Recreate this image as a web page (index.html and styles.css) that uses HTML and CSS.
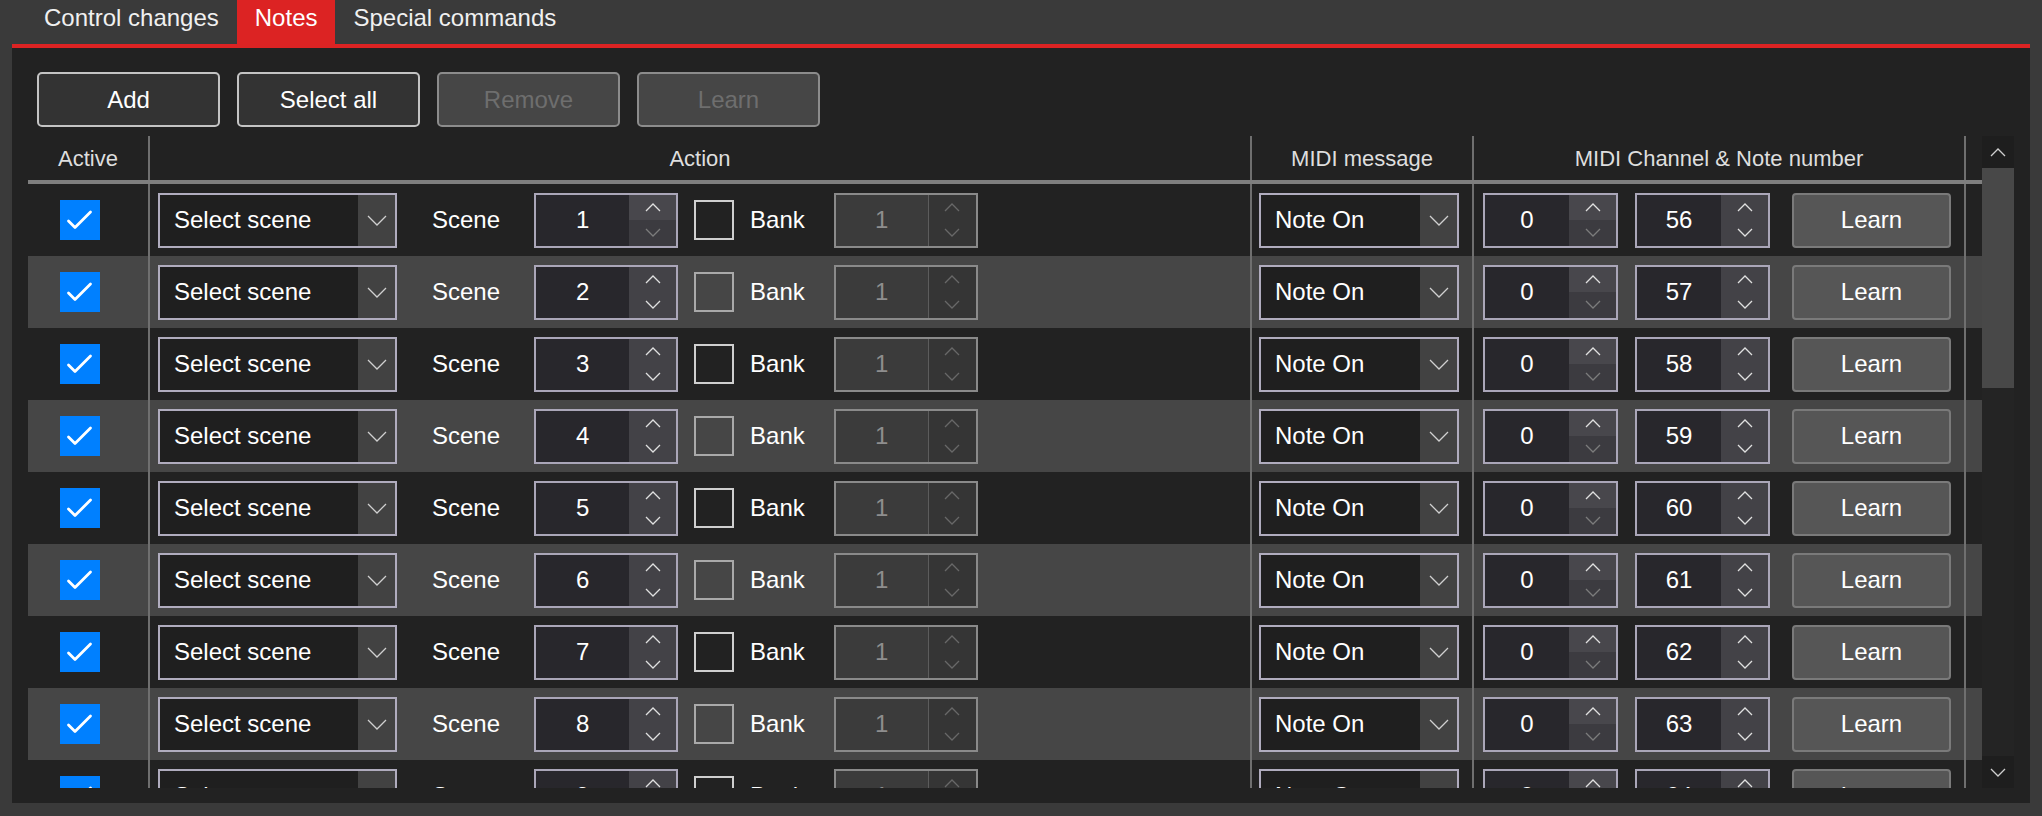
FILE: index.html
```html
<!DOCTYPE html>
<html>
<head>
<meta charset="utf-8">
<link rel="stylesheet" href="styles.css">
</head>
<body>
<div class="tabs">
  <div class="tab">Control changes</div>
  <div class="tab active">Notes</div>
  <div class="tab">Special commands</div>
</div>
<div class="panel">
  <div class="toolbar">
    <button class="btn">Add</button>
    <button class="btn">Select all</button>
    <button class="btn disabled">Remove</button>
    <button class="btn disabled">Learn</button>
  </div>
  <div class="table">
    <div class="table-main">
      <div class="head">
        <div class="hcell">Active</div>
        <div class="hcell sep">Action</div>
        <div class="hcell sep">MIDI message</div>
        <div class="hcell sep">MIDI Channel &amp; Note number</div>
        <div class="hcell sep"></div>
      </div>
      <div class="body" id="rows"></div>
    </div>
    <div class="scrollbar">
      <div class="sb-btn"><svg width="16" height="9" viewBox="0 0 16 9"><path d="M1 8 L8 1 L15 8" fill="none" stroke="#cfcfcf" stroke-width="1.3"/></svg></div>
      <div class="sb-thumb"></div>
      <div class="sb-track"></div>
      <div class="sb-btn"><svg width="16" height="9" viewBox="0 0 16 9"><path d="M1 1 L8 8 L15 1" fill="none" stroke="#cfcfcf" stroke-width="1.3"/></svg></div>
    </div>
  </div>
</div>
<script src="app.js"></script>
</body>
</html>
```
FILE: app.js
```js
(function () {
  var up = '<svg width="16" height="9" viewBox="0 0 16 9"><path d="M1 8 L8 1 L15 8" fill="none" stroke="currentColor" stroke-width="1.3"/></svg>';
  var down = '<svg width="16" height="9" viewBox="0 0 16 9"><path d="M1 1 L8 8 L15 1" fill="none" stroke="currentColor" stroke-width="1.3"/></svg>';
  var bigDown = '<svg width="20" height="11" viewBox="0 0 20 11"><path d="M1 1 L10 10 L19 1" fill="none" stroke="currentColor" stroke-width="1.3"/></svg>';
  var check = '<svg width="40" height="40" viewBox="0 0 40 40"><path d="M8.5 21 L15 27.5 L30.5 12" fill="none" stroke="#fff" stroke-width="2.8" stroke-linecap="round" stroke-linejoin="round"/></svg>';
  function num(cls, val, downDisabled) {
    return '<div class="num ' + cls + '"><div class="val">' + val + '</div><div class="spin' + (downDisabled ? ' split' : '') + '">' +
      '<div class="half">' + up + '</div><div class="half' + (downDisabled ? ' off' : '') + '">' + down + '</div></div></div>';
  }
  function select(cls, text) {
    return '<div class="select ' + cls + '"><div class="txt">' + text + '</div><div class="arr">' + bigDown + '</div></div>';
  }
  var html = '';
  for (var i = 1; i <= 9; i++) {
    html += '<div class="row">' +
      '<div class="cell c-active"><div class="cb">' + check + '</div></div>' +
      '<div class="cell sep c-action">' +
        select('sel-scene', 'Select scene') +
        '<span class="lbl lbl-scene">Scene</span>' +
        num('num-scene', i, i === 1) +
        '<div class="box"></div>' +
        '<span class="lbl lbl-bank">Bank</span>' +
        '<div class="num num-dis"><div class="val">1</div><div class="spin"><div class="half">' + up + '</div><div class="half">' + down + '</div></div></div>' +
      '</div>' +
      '<div class="cell sep c-msg">' + select('sel-msg', 'Note On') + '</div>' +
      '<div class="cell sep c-chan">' +
        num('num-small num-chan', 0, true) +
        num('num-small num-note', 55 + i, false) +
        '<button class="learn">Learn</button>' +
      '</div>' +
      '<div class="cell sep"></div>' +
    '</div>';
  }
  document.getElementById('rows').innerHTML = html;
})();
```
FILE: styles.css
```css
html, body {
  margin: 0;
  padding: 0;
}
body {
  background: #3a3a3a;
  font-family: "Liberation Sans", Arial, sans-serif;
  color: #fff;
  width: 2042px;
  height: 816px;
  overflow: hidden;
}
.tabs {
  display: flex;
  height: 44px;
  padding-left: 26px;
}
.tab {
  padding: 4px 18px 0;
  height: 44px;
  box-sizing: border-box;
  line-height: 28px;
  font-size: 24px;
  color: #f0f0f0;
}
.tab.active {
  background: #dc2323;
  color: #fff;
}
.panel {
  margin: 0 12px;
  height: 759px;
  box-sizing: border-box;
  border-top: 4px solid #dc2323;
  background: #222;
  padding: 24px 16px 15px 16px;
  display: flex;
  flex-direction: column;
}
.toolbar {
  display: flex;
  gap: 17px;
  padding-left: 9px;
  margin-bottom: 9px;
}
.btn {
  width: 183px;
  height: 55px;
  box-sizing: border-box;
  border: 2px solid #c4c4c4;
  border-radius: 5px;
  background: #333;
  color: #fff;
  font-family: "Liberation Sans", Arial, sans-serif;
  font-size: 24px;
  padding: 0;
}
.btn.disabled {
  background: #464646;
  border-color: #8c8c8c;
  color: #6e6e6e;
}
.table {
  display: flex;
  height: 652px;
}
.table-main {
  width: 1954px;
  display: flex;
  flex-direction: column;
}
.head, .row {
  display: grid;
  grid-template-columns: 120px 1102px 222px 492px 18px;
}
.head {
  height: 48px;
  box-sizing: border-box;
  border-bottom: 4px solid #7f7f7f;
}
.hcell {
  font-size: 22px;
  color: #dedede;
  display: flex;
  align-items: center;
  justify-content: center;
  padding-top: 2px;
  box-sizing: border-box;
}
.sep {
  border-left: 2px solid #6f6f6f;
}
.body {
  flex: 1;
  overflow: hidden;
}
.row {
  height: 72px;
  background: #222;
}
.row:nth-child(even) {
  background: #464646;
}
.cell {
  display: flex;
  align-items: center;
  box-sizing: border-box;
  font-size: 24px;
}
.c-active {
  padding-left: 32px;
}
.cb {
  width: 40px;
  height: 40px;
  background: #0080ff;
}
.cb svg {
  display: block;
}
.c-action {
  padding-left: 8px;
}
.select {
  height: 55px;
  box-sizing: border-box;
  border: 2px solid #b0acbe;
  background: #1f1f1f;
  display: flex;
}
.sel-scene {
  width: 239px;
}
.sel-msg {
  width: 200px;
}
.select .txt {
  flex: 1;
  padding-left: 14px;
  display: flex;
  align-items: center;
  color: #fff;
}
.select .arr {
  width: 37px;
  background: #424242;
  display: flex;
  align-items: center;
  justify-content: center;
  color: #d0d0d0;
}
.select .arr svg {
  display: block;
}
.lbl {
  color: #fff;
}
.lbl-scene {
  margin-left: 35px;
}
.num {
  height: 55px;
  box-sizing: border-box;
  border: 2px solid #aaa6b8;
  background: #28272c;
  display: flex;
  color: #fff;
}
.num-scene {
  width: 144px;
  margin-left: 34px;
}
.num .val {
  flex: 1;
  display: flex;
  align-items: center;
  justify-content: center;
}
.spin {
  width: 47px;
  display: flex;
  flex-direction: column;
  background: #434247;
  color: #e0e0e0;
}
.spin .half {
  flex: 1;
  display: flex;
  align-items: center;
  justify-content: center;
}
.spin svg {
  display: block;
}
.spin.split .half:first-child {
  background: #48474c;
}
.spin.split .half.off {
  background: #3c3b40;
  color: #7c7c7c;
}
.box {
  width: 40px;
  height: 40px;
  box-sizing: border-box;
  border: 2px solid #cfcfcf;
  margin-left: 16px;
}
.row:nth-child(even) .box {
  border-color: #a9a9a9;
}
.lbl-bank {
  margin-left: 16px;
}
.num-dis {
  width: 144px;
  margin-left: 29px;
  border-color: #8a8a8a;
  background: #3b3b3b;
  color: #8e8e8e;
}
.num-dis .spin {
  background: #353535;
  border-left: 1px solid #5c5c5c;
  color: #686868;
}
.c-msg {
  padding-left: 7px;
}
.c-chan {
  padding-left: 9px;
}
.num-small {
  width: 135px;
}
.num-note {
  margin-left: 17px;
}
.learn {
  margin-left: 22px;
  width: 159px;
  height: 55px;
  box-sizing: border-box;
  border: 2px solid #7a7a7a;
  border-radius: 4px;
  background: #565656;
  color: #fff;
  font-family: "Liberation Sans", Arial, sans-serif;
  font-size: 24px;
  padding: 0;
}
.scrollbar {
  width: 32px;
  display: flex;
  flex-direction: column;
  background: #242424;
}
.sb-btn {
  height: 32px;
  background: #1e1e1e;
  display: flex;
  align-items: center;
  justify-content: center;
}
.sb-btn svg {
  display: block;
}
.sb-thumb {
  height: 220px;
  background: #484848;
}
.sb-track {
  flex: 1;
}
```
